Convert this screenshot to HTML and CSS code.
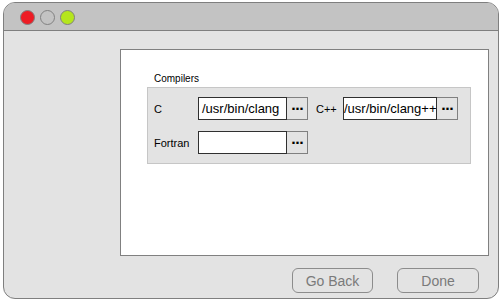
FILE: index.html
```html
<!DOCTYPE html>
<html lang="en">
<head>
  <meta charset="UTF-8">
  <title>Compilers</title>
  <link rel="stylesheet" href="styles.css">
</head>
<body>
  <div class="window">
    <div class="title-bar">
      <span class="light red"></span>
      <span class="light gray"></span>
      <span class="light green"></span>
    </div>

    <div class="content">
      <div class="panel">
        <div class="group-label">Compilers</div>
        <div class="group">
          <div class="row">
            <span class="label">C</span>
            <div class="field">
              <div class="path">/usr/bin/clang</div>
              <button class="browse">···</button>
            </div>
            <span class="label label-short">C++</span>
            <div class="field">
              <div class="path path-wide">/usr/bin/clang++</div>
              <button class="browse">···</button>
            </div>
          </div>
          <div class="row">
            <span class="label">Fortran</span>
            <div class="field">
              <div class="path"></div>
              <button class="browse">···</button>
            </div>
          </div>
        </div>
      </div>

      <div class="footer">
        <button class="nav-button back">Go Back</button>
        <button class="nav-button done">Done</button>
      </div>
    </div>
  </div>
</body>
</html>
```

FILE: styles.css
```css
body {
  margin: 0;
  font-family: "Liberation Sans", Arial, sans-serif;
  background: white;
}

.window {
  box-sizing: border-box;
  margin: 2px 0 0 3px;
  width: 496px;
  height: 297px;
  border: 1px solid #7f7f7f;
  border-radius: 12px;
  background: #e3e3e3;
  overflow: hidden;
  display: flex;
  flex-direction: column;
}

.title-bar {
  box-sizing: border-box;
  height: 28px;
  padding: 2px 0 0 16px;
  background: #c3c3c3;
  border-bottom: 1px solid #7f7f7f;
  display: flex;
  align-items: center;
  gap: 5px;
}

.light {
  box-sizing: border-box;
  width: 15px;
  height: 15px;
  border-radius: 50%;
  border: 1px solid #808080;
}

.red {
  background: #ed1c24;
}

.green {
  background: #b5e61d;
}

.content {
  flex-grow: 1;
  padding: 18px 9px 0 116px;
}

.panel {
  box-sizing: border-box;
  height: 207px;
  padding: 23px 0 0 26px;
  border: 1px solid #808080;
  background: white;
}

.group-label {
  font-size: 10px;
  line-height: 12px;
  margin: 0 0 2px 7px;
}

.group {
  box-sizing: border-box;
  width: 324px;
  padding: 9px 0 9px 6px;
  border: 1px solid #c6c6c6;
  background: #e3e3e3;
  display: flex;
  flex-direction: column;
  gap: 11px;
}

.row {
  display: flex;
  align-items: center;
  height: 23px;
}

.label {
  width: 44px;
  font-size: 11px;
}

.label-short {
  width: 27px;
  margin-left: 8px;
}

.field {
  display: flex;
  height: 23px;
}

.path {
  box-sizing: border-box;
  width: 89px;
  padding-left: 3px;
  border: 1px solid #303030;
  background: white;
  font-size: 13px;
  line-height: 21px;
  white-space: nowrap;
  overflow: hidden;
}

.path-wide {
  width: 94px;
  padding-left: 0;
}

.browse {
  box-sizing: border-box;
  width: 21px;
  padding: 0;
  border: 1px solid #808080;
  border-left: none;
  background: #e3e3e3;
  font-family: "DejaVu Sans", sans-serif;
  font-size: 13px;
  font-weight: bold;
  letter-spacing: -1px;
}

.footer {
  margin-top: 12px;
  padding-right: 10px;
  display: flex;
  justify-content: flex-end;
  gap: 24px;
}

.nav-button {
  box-sizing: border-box;
  height: 25px;
  width: 81px;
  border: 1px solid #8c8c8c;
  border-radius: 6px;
  background: transparent;
  color: #7a7a7a;
  font-family: "Liberation Sans", Arial, sans-serif;
  font-size: 14px;
}

.done {
  width: 82px;
}
```
